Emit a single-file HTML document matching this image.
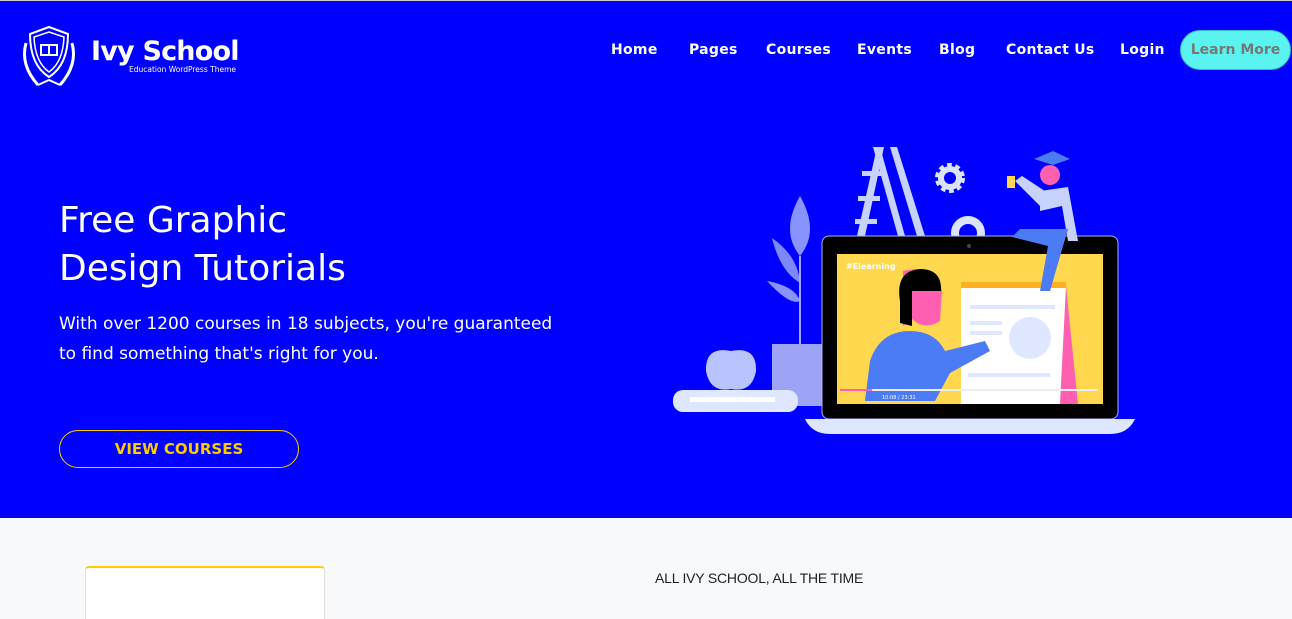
<!DOCTYPE html>
<html><head><meta charset="utf-8"><style>
*{margin:0;padding:0;box-sizing:border-box}
html,body{width:1292px;height:619px;overflow:hidden}
body{font-family:"DejaVu Sans","Liberation Sans",sans-serif;background:#f8f9fa;position:relative}
.hero{position:absolute;left:0;top:0;width:1292px;height:518px;background:#0000fe;border-top:1px solid #ccc}
.nav{position:absolute;top:41px;color:#fff;font-size:14px;font-weight:bold;letter-spacing:.3px}
.btn{position:absolute;left:1180px;top:29px;width:111px;height:40px;border-radius:20px;background:#5af3f0;border:1px solid #3bb;color:#777;font-weight:bold;font-size:14px;text-align:center;line-height:38px}
h1{position:absolute;left:59px;top:196px;color:#fff;font-size:36px;font-weight:normal;line-height:48px}
.sub{position:absolute;left:59px;top:308px;color:#fff;font-size:17px;line-height:30px}
.vc{position:absolute;left:59px;top:429px;width:240px;height:38px;border:1px solid #fc0;border-radius:19px;color:#fc0;font-weight:bold;font-size:15px;text-align:center;line-height:36px}
.card{position:absolute;left:85px;top:566px;width:240px;height:60px;background:#fff;border:1px solid #ddd;border-top:2px solid #fc0;border-radius:4px}
.all{position:absolute;left:655px;top:570px;font-size:14px;color:#222;font-family:"Liberation Sans",sans-serif;letter-spacing:-.2px}
</style></head><body>
<div class="hero">
<svg style="position:absolute;left:18px;top:24px" width="62" height="66" viewBox="0 0 62 66" fill="none" stroke="#fff" stroke-width="2">
<path d="M31 2 L50 9 Q50 40 31 52 Q12 40 12 9 Z"/><path d="M31 7 L46 12 Q45 37 31 47 Q17 37 16 12 Z" stroke-width="1.5"/>
<rect x="23" y="20" width="16" height="10"/><path d="M31 20v10"/>
<path d="M8 18 Q2 40 20 60 M54 18 Q60 40 42 60" stroke-width="3"/>
<path d="M20 60 L31 55 L42 60" stroke-width="2"/></svg>
<div style="position:absolute;left:91px;top:35px;color:#fff;font-size:27px;font-weight:bold;letter-spacing:-.8px">Ivy School</div>
<div style="position:absolute;left:129px;top:64px;color:#fff;font-size:7.5px">Education WordPress Theme</div>
<div class="nav" style="left:611px">Home</div>
<div class="nav" style="left:689px">Pages</div>
<div class="nav" style="left:766px">Courses</div>
<div class="nav" style="left:857px">Events</div>
<div class="nav" style="left:939px">Blog</div>
<div class="nav" style="left:1006px">Contact Us</div>
<div class="nav" style="left:1120px">Login</div>
<div class="btn">Learn More</div>
<h1>Free Graphic<br>Design Tutorials</h1>
<div class="sub">With over 1200 courses in 18 subjects, you're guaranteed<br>to find something that's right for you.</div>
<div class="vc">VIEW COURSES</div>
<svg style="position:absolute;left:660px;top:130px" width="490" height="340" viewBox="660 130 490 340">
<g fill="#c7d2ff"><path d="M857 235 L877 146 L884 146 L865 235Z"/><path d="M890 146 L897 146 L925 235 L917 235Z"/><path d="M873 146 L880 146 L905 235 L898 235Z"/>
<rect x="862" y="170" width="20" height="5"/><rect x="858" y="195" width="22" height="5"/><rect x="855" y="218" width="22" height="5"/></g>
<circle cx="950" cy="177" r="11" fill="none" stroke="#dce3ff" stroke-width="8" stroke-dasharray="4 3"/>
<circle cx="950" cy="177" r="9" fill="none" stroke="#dce3ff" stroke-width="6"/>
<circle cx="968" cy="232" r="13" fill="none" stroke="#dce3ff" stroke-width="8"/>
<path d="M800 195 Q780 230 800 255 Q820 230 800 195Z" fill="#8893ff"/>
<path d="M772 237 Q780 270 800 282 Q798 255 772 237Z" fill="#7d88ff"/>
<path d="M767 280 Q790 305 800 300 Q795 285 767 280Z" fill="#8893ff"/>
<path d="M800 255 L800 345" stroke="#a0a8ff" stroke-width="2"/>
<rect x="772" y="343" width="50" height="62" fill="#9ea4f5"/>
<path d="M731 350 Q705 345 706 370 Q710 392 731 388 Q752 392 756 370 Q757 345 731 350Z" fill="#b9c4ff"/>
<rect x="673" y="389" width="125" height="22" rx="10" fill="#dfe6ff"/><rect x="690" y="396" width="85" height="5" fill="#fff"/>
<rect x="822" y="235" width="296" height="183" rx="7" fill="#000" stroke="#a8b4ff" stroke-width="1"/>
<rect x="837" y="253" width="266" height="150" fill="#ffd84f"/>
<rect x="961" y="281" width="105" height="122" fill="#fff"/><rect x="961" y="281" width="105" height="6" fill="#ffb020"/>
<path d="M1066 285 L1078 403 L1060 403Z" fill="#ff5fb0"/>
<circle cx="1030" cy="337" r="21" fill="#dfe6ff"/>
<g fill="#dfe6ff"><rect x="970" y="304" width="85" height="4"/><rect x="970" y="320" width="32" height="4"/><rect x="970" y="330" width="32" height="4"/><rect x="968" y="372" width="82" height="4"/></g>
<path d="M865 400 L870 360 Q880 330 910 330 Q935 330 945 350 L985 340 L990 350 L950 372 L935 400Z" fill="#4b7bf5"/>
<path d="M903 270 Q935 262 942 290 L940 320 Q925 330 912 318 L903 325Z" fill="#ff5fb0"/>
<path d="M900 300 Q895 270 920 268 Q942 268 941 290 L912 290 L912 325 L900 322Z" fill="#000"/>
<text x="846" y="268" fill="#fff" font-size="8" font-weight="bold">#Elearning</text>
<rect x="840" y="388" width="258" height="2" fill="#eee"/><rect x="840" y="388" width="32" height="2" fill="#ff5fb0"/>
<text x="882" y="398" fill="#fff" font-size="5">10:08 / 23:31</text>
<path d="M805 418 L1135 418 Q1128 433 1110 433 L830 433 Q812 433 805 418Z" fill="#dfe6ff"/>
<circle cx="969" cy="245" r="2" fill="#444"/>
<path d="M1040 190 L1068 186 L1078 240 L1068 240 L1062 205 L1040 210Z" fill="#c7d2ff"/>
<path d="M1040 205 L1060 200 L1022 175 L1015 180Z" fill="#c7d2ff"/>
<path d="M1045 228 L1068 228 L1050 290 L1040 290 L1048 245 L1012 236 L1020 228Z" fill="#4b7bf5"/>
<circle cx="1050" cy="174" r="10" fill="#ff5fb0"/>
<path d="M1034 158 L1053 150 L1070 158 L1053 164Z" fill="#4b7bf5"/>
<rect x="1007" y="175" width="8" height="12" fill="#ffd84f"/>
</svg>
</div>
<div class="card"></div>
<div class="all">ALL IVY SCHOOL, ALL THE TIME</div>
</body></html>
